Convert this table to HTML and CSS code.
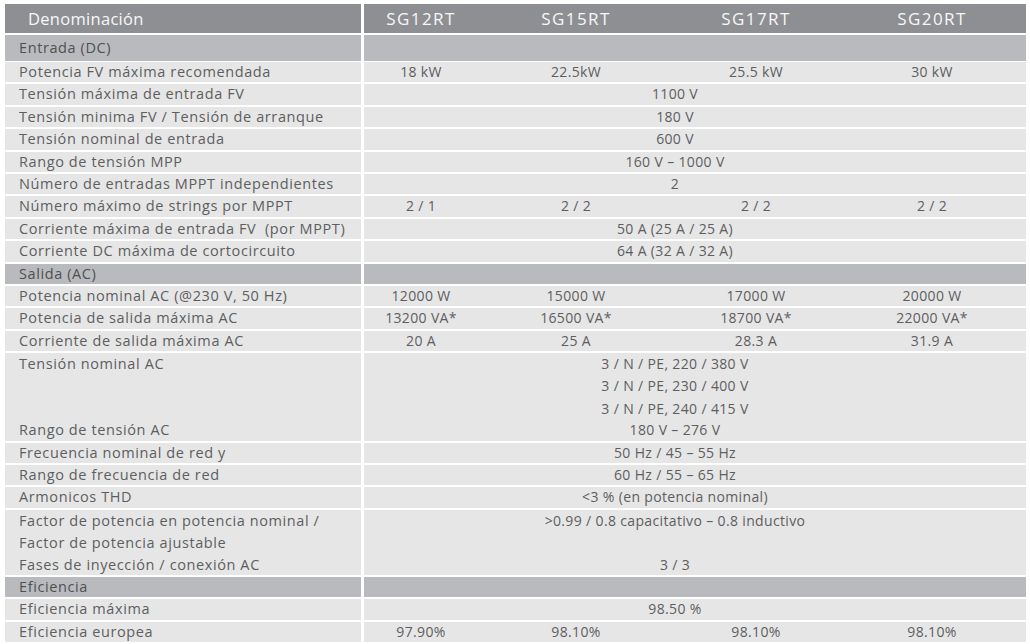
FILE: index.html
```html
<!DOCTYPE html>
<html lang="es">
<head>
<meta charset="utf-8">
<title>Especificaciones SG RT</title>
<link rel="stylesheet" href="styles.css">
</head>
<body>
<div class="spec">
  <div class="row head">
    <div class="label">Denominación</div>
    <div class="vals"><span>SG12RT</span><span>SG15RT</span><span>SG17RT</span><span>SG20RT</span></div>
  </div>

  <div class="row section first">
    <div class="label">Entrada (DC)</div>
    <div class="vals"></div>
  </div>
  <div class="row">
    <div class="label">Potencia FV máxima recomendada</div>
    <div class="vals"><span>18 kW</span><span>22.5kW</span><span>25.5 kW</span><span>30 kW</span></div>
  </div>
  <div class="row">
    <div class="label">Tensión máxima de entrada FV</div>
    <div class="vals span">1100 V</div>
  </div>
  <div class="row">
    <div class="label">Tensión minima FV / Tensión de arranque</div>
    <div class="vals span">180 V</div>
  </div>
  <div class="row">
    <div class="label">Tensión nominal de entrada</div>
    <div class="vals span">600 V</div>
  </div>
  <div class="row">
    <div class="label">Rango de tensión MPP</div>
    <div class="vals span">160 V – 1000 V</div>
  </div>
  <div class="row">
    <div class="label">Número de entradas MPPT independientes</div>
    <div class="vals span">2</div>
  </div>
  <div class="row">
    <div class="label">Número máximo de strings por MPPT</div>
    <div class="vals"><span>2 / 1</span><span>2 / 2</span><span>2 / 2</span><span>2 / 2</span></div>
  </div>
  <div class="row">
    <div class="label">Corriente máxima de entrada FV&nbsp; (por MPPT)</div>
    <div class="vals span">50 A (25 A / 25 A)</div>
  </div>
  <div class="row">
    <div class="label">Corriente DC máxima de cortocircuito</div>
    <div class="vals span">64 A (32 A / 32 A)</div>
  </div>

  <div class="row section">
    <div class="label">Salida (AC)</div>
    <div class="vals"></div>
  </div>
  <div class="row">
    <div class="label">Potencia nominal AC (@230 V, 50 Hz)</div>
    <div class="vals"><span>12000 W</span><span>15000 W</span><span>17000 W</span><span>20000 W</span></div>
  </div>
  <div class="row">
    <div class="label">Potencia de salida máxima AC</div>
    <div class="vals"><span>13200 VA*</span><span>16500 VA*</span><span>18700 VA*</span><span>22000 VA*</span></div>
  </div>
  <div class="row">
    <div class="label">Corriente de salida máxima AC</div>
    <div class="vals"><span>20 A</span><span>25 A</span><span>28.3 A</span><span>31.9 A</span></div>
  </div>
  <div class="row l3">
    <div class="label">Tensión nominal AC</div>
    <div class="vals span">3 / N / PE, 220 / 380 V<br>3 / N / PE, 230 / 400 V<br>3 / N / PE, 240 / 415 V</div>
  </div>
  <div class="row">
    <div class="label">Rango de tensión AC</div>
    <div class="vals span">180 V – 276 V</div>
  </div>
  <div class="row">
    <div class="label">Frecuencia nominal de red y</div>
    <div class="vals span">50 Hz / 45 – 55 Hz</div>
  </div>
  <div class="row">
    <div class="label">Rango de frecuencia de red</div>
    <div class="vals span">60 Hz / 55 – 65 Hz</div>
  </div>
  <div class="row">
    <div class="label">Armonicos THD</div>
    <div class="vals span">&lt;3 % (en potencia nominal)</div>
  </div>
  <div class="row l2">
    <div class="label">Factor de potencia en potencia nominal /<br>Factor de potencia ajustable</div>
    <div class="vals span">&gt;0.99 / 0.8 capacitativo – 0.8 inductivo</div>
  </div>
  <div class="row">
    <div class="label">Fases de inyección / conexión AC</div>
    <div class="vals span">3 / 3</div>
  </div>

  <div class="row section">
    <div class="label">Eficiencia</div>
    <div class="vals"></div>
  </div>
  <div class="row">
    <div class="label">Eficiencia máxima</div>
    <div class="vals span">98.50 %</div>
  </div>
  <div class="row">
    <div class="label">Eficiencia europea</div>
    <div class="vals"><span>97.90%</span><span>98.10%</span><span>98.10%</span><span>98.10%</span></div>
  </div>
</div>
</body>
</html>
```

FILE: styles.css
```css
html, body {
  margin: 0;
  padding: 0;
  background: #ffffff;
}

body {
  font-family: "Open Sans", "Liberation Sans", sans-serif;
  font-size: 14px;
  color: #5d5e60;
}

.spec {
  padding: 4px 4px 0 5px;
  display: flex;
  flex-direction: column;
  row-gap: 2px;
}

.row {
  display: grid;
  grid-template-columns: 356px 662px;
  column-gap: 3px;
  height: 20.4px;
  line-height: 20.4px;
}

.row .label,
.row .vals {
  background: #e6e6e7;
  white-space: nowrap;
}

.label {
  padding-left: 14px;
  font-size: 14.5px;
  letter-spacing: 0.6px;
}

.vals {
  display: grid;
  grid-template-columns: 114px 196px 164px 188px;
  text-align: center;
  letter-spacing: 0.35px;
}

.vals.span {
  display: block;
  padding-right: 40px;
}

.row.l3 {
  height: 65.2px;
  line-height: 22.4px;
}

.row.l2 {
  height: 42.8px;
  line-height: 22.4px;
}

.row.head {
  height: 29px;
  line-height: 29px;
}

.row.head .label,
.row.head .vals {
  background: #8e8f93;
  color: #f7f7f7;
}

.row.head .label {
  padding-left: 23px;
  font-size: 16.5px;
  letter-spacing: 0.3px;
}

.row.head .vals {
  font-size: 17px;
  letter-spacing: 1.4px;
}

.row.section .label,
.row.section .vals {
  background: #b9babd;
}

.row.section .label {
  color: #4f5052;
}

.row.section.first {
  height: 25px;
  line-height: 26px;
}
```
